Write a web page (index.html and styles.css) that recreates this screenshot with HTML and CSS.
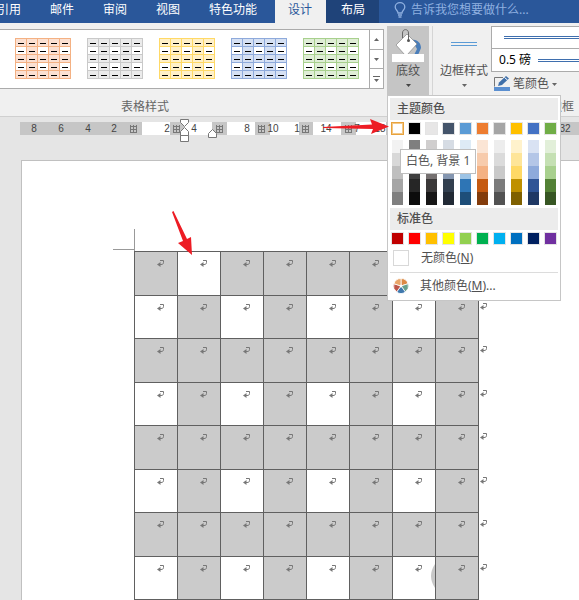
FILE: index.html
```html
<!DOCTYPE html>
<html lang="zh-CN">
<head>
    <meta charset="UTF-8">
    <meta name="viewport" content="width=device-width, initial-scale=1.0">
    <title>表格工具 - 设计</title>
    <link rel="stylesheet" href="styles.css">
</head>
<body>
    <nav class="tabs">
        <button class="tab">引用</button>
        <button class="tab">邮件</button>
        <button class="tab">审阅</button>
        <button class="tab">视图</button>
        <button class="tab">特色功能</button>
        <button class="tab active">设计</button>
        <button class="tab layout">布局</button>
        <button class="tell-me">
            <svg width="12" height="16" viewBox="0 0 12 16" fill="none" stroke="#8fb0e0" stroke-width="1.3">
                <path d="M4 11C4 8.500 1.200 8 1.200 5a4.800 4.300 0 0 1 9.600 0c0 3-2.800 3.500-2.800 6zM4 13h4M4.500 15h3"/>
            </svg>
            <span>告诉我您想要做什么...</span>
        </button>
    </nav>

    <div class="ribbon">
        <section class="group styles-group">
            <div class="gallery">
                <div class="thumbs" id="thumbs"></div>
                <div class="scroller">
                    <button aria-label="上一行"><svg width="5" height="3"><path d="M0 3h5L2.500 0z" fill="#666"/></svg></button>
                    <button aria-label="下一行"><svg width="5" height="3"><path d="M0 0h5L2.500 3z" fill="#666"/></svg></button>
                    <button aria-label="其他"><svg width="7" height="6"><path d="M0 0h7v1H0zM1 3h5L3.500 6z" fill="#666"/></svg></button>
                </div>
            </div>
            <h2 class="group-label">表格样式</h2>
        </section>

        <div class="shading">
            <button class="big-button pressed">
                <svg width="32" height="36" viewBox="0 0 32 36">
                    <path d="M20 12c5-1 9 3 9 8l-3 7h-4l3-6z" fill="#4a7eba"/>
                    <path d="M4 17L15 6l10 10-10 11h-2z" fill="#fff" stroke="#777" stroke-width=".6"/>
                    <path d="M10.500 10V5c0-4.500 6-4.500 6 0v7" fill="none" stroke="#666"/>
                    <circle cx="16.500" cy="12.500" r="1.500" fill="#555"/>
                    <rect y="26" width="32" height="8" fill="#fff"/>
                </svg>
                <span>底纹</span>
                <svg class="caret" width="5" height="3"><path d="M0 0h5L2.500 3z" fill="#444"/></svg>
            </button>

            <div class="menu">
                <h3>主题颜色</h3>
                <div class="row" id="theme"></div>
                <div class="shades" id="shades"></div>
                <h3>标准色</h3>
                <div class="row" id="standard"></div>
                <button class="item"><span class="none-box"></span>无颜色(<u>N</u>)</button>
                <button class="item more">
                    <svg width="16" height="16" viewBox="-8 -8 16 16" stroke="#fff" stroke-width=".8">
                        <path d="M0 0V-7.500A7.500 7.500 0 0 1 7.100-2.300z" fill="#dd8a45"/>
                        <path d="M0 0L7.100-2.300A7.500 7.500 0 0 1 4.400 6z" fill="#68a08c"/>
                        <path d="M0 0L4.400 6A7.500 7.500 0 0 1-4.400 6z" fill="#3f78ad"/>
                        <path d="M0 0L-4.400 6A7.500 7.500 0 0 1-7.100-2.300z" fill="#bd5548"/>
                        <path d="M0 0L-7.100-2.300A7.500 7.500 0 0 1 0-7.500z" fill="#e9a568"/>
                        <circle r="1" fill="#fff"/>
                    </svg>其他颜色(<u>M</u>)...
                </button>
                <div class="tooltip" role="tooltip">白色, 背景 1</div>
            </div>
        </div>

        <section class="group border-group">
            <div class="border-tools">
                <button class="big-button">
                    <svg width="32" height="36"><path d="M3 14.500h26M3 17.500h26" stroke="#5b9bd5"/></svg>
                    <span>边框样式</span>
                    <svg class="caret" width="5" height="3"><path d="M0 0h5L2.500 3z" fill="#666"/></svg>
                </button>
                <div class="pen">
                    <button class="line-box"><i class="double-line"></i></button>
                    <button class="line-box weight">0.5 磅<i class="double-line"></i></button>
                    <button class="pen-color">
                        <svg width="16" height="16" viewBox="0 0 16 16">
                            <path d="M9 1.500H.500v9" fill="none" stroke="#777"/>
                            <path d="M4 10l1-3.500L12 0l3 2.500L8 9z" fill="#3f6fa8"/>
                            <path d="M10.500 1.500l3 2.500" stroke="#fff"/>
                            <rect y="11" width="16" height="4" fill="#5b8fd0"/>
                        </svg>
                        笔颜色
                        <svg width="5" height="3"><path d="M0 0h5L2.500 3z" fill="#666"/></svg>
                    </button>
                </div>
            </div>
            <h2 class="group-label">边框</h2>
        </section>
    </div>

    <main class="workspace">
        <svg class="ruler" id="ruler" height="26"></svg>
        <div class="page">
            <table class="grid" id="grid"></table>
            <svg class="corner" width="22" height="22"><path d="M0 20.500h21.500M21.500 0v22" fill="none" stroke="#999"/></svg>
            <svg class="watermark" width="4" height="24"><path d="M4 0Q-4 12 4 24z" fill="#c8c8c8"/></svg>
        </div>
    </main>

    <svg class="arrow arrow-menu" width="66" height="16" viewBox="0 0 66 16"><path d="M0 8L49 5.500 47 0 66 7.500 48 15l2-5L0 9z" fill="#ed1c24"/></svg>
    <svg class="arrow arrow-cell" width="22" height="46" viewBox="0 0 22 46"><path d="M0 2l1.500-1L15 29l4-2 1 18L6 33l5-2z" fill="#ed1c24"/></svg>

    <script src="script.js"></script>
</body>
</html>
```
FILE: styles.css
```css
* {
    box-sizing: border-box;
}
body {
    margin: 0;
    min-height: 100vh;
    overflow: hidden;
    display: flex;
    flex-direction: column;
    position: relative;
    background-color: #e5e5e5;
    color: #505050;
    font-family: "Noto Sans", "Noto Sans CJK SC", sans-serif;
    font-size: 12px;
    line-height: 16px;
}
button {
    border: none;
    background: none;
    padding: 0;
    color: inherit;
    font: inherit;
}
h2, h3 {
    margin: 0;
    font-size: 12px;
    font-weight: normal;
}
svg {
    display: block;
    flex: none;
}

/* Tabs */
.tabs {
    display: flex;
    height: 23px;
    padding-right: 8px;
    background-color: #2a579a;
    color: #fff;
    white-space: nowrap;
}
.tab {
    flex: none;
    padding: 0 14px 4px 15px;
}
.tab:first-child {
    margin-left: -18px;
}
.tab.active {
    margin-left: 4px;
    padding: 0 14px 4px 13px;
    background-color: #f0f0f0;
    color: #2a579a;
}
.tab.layout {
    background-color: #1f4379;
}
.tell-me {
    display: flex;
    align-items: center;
    gap: 5px;
    padding: 0 0 4px 15px;
    color: #8fb0e0;
}

/* Ribbon */
.ribbon {
    display: flex;
    height: 94px;
    padding-top: 3px;
    background-color: #f0f0f0;
    border-bottom: 1px solid #d0d0d0;
    white-space: nowrap;
}
.group {
    display: flex;
    flex-direction: column;
    justify-content: space-between;
    padding-bottom: 1px;
}
.group-label {
    color: #666;
}
.styles-group {
    width: 387px;
    flex: none;
    padding-top: 3px;
}
.styles-group .group-label {
    padding-left: 121px;
}
.gallery {
    display: flex;
    width: 384px;
    height: 60px;
    background-color: #fff;
    border: 1px solid #ababab;
    border-left: none;
}
.thumbs {
    display: flex;
    flex: 1;
    gap: 16px;
    padding: 8px 0 0 15px;
}
.scroller {
    display: flex;
    flex-direction: column;
    width: 14px;
    border-left: 1px solid #ababab;
}
.scroller button {
    flex: 1;
    display: flex;
    align-items: center;
    justify-content: center;
}
.scroller button + button {
    border-top: 1px solid #ababab;
}
.shading {
    position: relative;
    width: 46px;
    flex: none;
    border-right: 1px solid #d5d5d5;
}
.big-button {
    display: flex;
    flex-direction: column;
    align-items: center;
    padding-top: 2px;
}
.big-button span {
    margin-top: -1px;
}
.big-button .caret {
    margin-top: 5px;
}
.pressed {
    width: 42px;
    height: 70px;
    background-color: #c5c5c5;
}
.border-group {
    flex: 1;
    min-width: 0;
}
.border-group .group-label {
    padding-right: 5px;
    text-align: right;
}
.border-tools {
    display: flex;
    gap: 3px;
    padding-left: 7px;
}
.pen {
    flex: 1;
    display: flex;
    flex-direction: column;
}
.line-box {
    display: flex;
    align-items: center;
    gap: 7px;
    height: 23px;
    padding-left: 12px;
    background-color: #fff;
    border: 1px solid #ababab;
    border-right: none;
}
.line-box.weight {
    padding-left: 7px;
    border-top: none;
    color: #000;
}
.double-line {
    flex: 1;
    height: 3px;
    border: solid #3f6fae;
    border-width: 1px 0;
}
.pen-color {
    display: flex;
    align-items: center;
    gap: 3px;
    padding: 4px 0 0 3px;
}

/* Color menu */
.menu {
    position: absolute;
    top: 69px;
    left: 0;
    z-index: 2;
    width: 174px;
    padding: 2px;
    background-color: #fff;
    border: 1px solid #c6c6c6;
}
.menu h3 {
    height: 22px;
    padding: 2px 0 0 7px;
    background-color: #ececec;
    font-weight: 500;
    line-height: 18px;
}
.row, .shades {
    display: grid;
    grid-template-columns: repeat(10, 11px);
    column-gap: 6px;
    padding: 0 2px;
}
.row {
    padding-top: 3px;
}
.row button {
    height: 11px;
    outline: 1px solid #e4e4e4;
}
.row .selected {
    outline: 1px solid #e8a33d;
    border: 1px solid #f3c888;
}
.shades {
    padding-top: 6px;
    padding-bottom: 3px;
}
.shades button {
    height: 13px;
}
.item {
    display: flex;
    align-items: center;
    width: 100%;
    height: 28px;
    padding-left: 3px;
}
.none-box {
    width: 16px;
    height: 16px;
    margin-right: 12px;
    border: 1px solid #d8d8d8;
}
.more {
    height: 26px;
    border-top: 1px solid #dcdcdc;
}
.more svg {
    margin-right: 11px;
}
.tooltip {
    position: absolute;
    top: 53px;
    left: 12px;
    padding: 3px 5px 4px;
    background-color: #fff;
    border: 1px solid #bebebe;
    color: #555;
}

/* Document */
.workspace {
    flex: 1;
    display: flex;
    flex-direction: column;
    padding-top: 4px;
}
.ruler {
    width: 100%;
    overflow: visible;
    font-family: "Liberation Sans", sans-serif;
    font-size: 10px;
}
.page {
    position: relative;
    flex: 1;
    margin: 13px 0 0 21px;
    padding: 90px 0 0 112px;
    background-color: #fff;
    border: solid #c0c0c0;
    border-width: 1px 0 0 1px;
}
.grid {
    border-collapse: collapse;
}
.grid td {
    width: 43px;
    height: 43px;
    padding: 7px 0 0 22px;
    background-color: #cbcbcb;
    border: 1px solid #606060;
    vertical-align: top;
}
.grid tr:nth-child(odd) td {
    height: 44px;
}
.grid td.white {
    background-color: #fff;
}
.grid td.row-end {
    width: 12px;
    padding: 6px 0 0 1px;
    background: none;
    border: none;
}
.corner {
    position: absolute;
    top: 68px;
    left: 91px;
}
.watermark {
    position: absolute;
    top: 403px;
    left: 409px;
}
.arrow {
    position: absolute;
    z-index: 3;
}
.arrow-menu {
    top: 119px;
    left: 323px;
}
.arrow-cell {
    top: 210px;
    left: 172px;
}
```
FILE: script.js
```js
// Table style thumbnails: border color, fill color
const tableStyles = [
    ["#f4b183", "#fbe0d2"],
    ["#c9c9c9", "#ebebeb"],
    ["#ffd966", "#fff0c8"],
    ["#8eaadb", "#d5e0f3"],
    ["#a8d08d", "#dfeed6"]
];

document.getElementById("thumbs").innerHTML = tableStyles.map(([line, fill]) => {
    let cells = "";
    for (let r = 0; r < 5; r++) {
        for (let c = 0; c < 5; c++) {
            const x = c * 11 + 0.5;
            const y = r * 8 + 0.5;
            const color = r % 2 && c % 2 === 0 ? "#fff" : fill;
            cells += `<rect x="${x}" y="${y}" width="11" height="8" fill="${color}" stroke="${line}"/>`;
            cells += `<path d="M${x + 2.5} ${y + 5}h6" stroke="#000"/>`;
        }
    }
    return `<svg width="56" height="41">${cells}</svg>`;
}).join("");

// Color palettes
const theme = ["#ffffff", "#000000", "#e7e6e6", "#44546a", "#5b9bd5", "#ed7d31", "#a5a5a5", "#ffc000", "#4472c4", "#70ad47"];
const standard = ["#c00000", "#ff0000", "#ffc000", "#ffff00", "#92d050", "#00b050", "#00b0f0", "#0070c0", "#002060", "#7030a0"];
const shades = [
    ["#f2f2f2", "#7f7f7f", "#d0cece", "#d6dce4", "#deebf6", "#fbe5d5", "#ededed", "#fff2cc", "#d9e2f3", "#e2efd9"],
    ["#d8d8d8", "#595959", "#aeabab", "#adb9ca", "#bdd7ee", "#f7cbac", "#dbdbdb", "#fee599", "#b4c6e7", "#c5e0b3"],
    ["#bfbfbf", "#3f3f3f", "#757070", "#8496b0", "#9cc3e5", "#f4b183", "#c9c9c9", "#ffd965", "#8eaadb", "#a8d08d"],
    ["#a5a5a5", "#262626", "#3a3838", "#323f4f", "#2e75b5", "#c55a11", "#7b7b7b", "#bf9000", "#2f5496", "#538135"],
    ["#7f7f7f", "#0c0c0c", "#171616", "#222a35", "#1e4e79", "#833c0b", "#525252", "#7f6000", "#1f3864", "#375623"]
];

function swatches(colors) {
    return colors.map(c => `<button style="background-color: ${c}" aria-label="${c}"></button>`).join("");
}

document.getElementById("theme").innerHTML = swatches(theme);
document.querySelector("#theme button").className = "selected";
document.getElementById("standard").innerHTML = swatches(standard);
document.getElementById("shades").innerHTML = swatches(shades.flat());

// Ruler: margins are gray, columns are white, markers sit on the column borders
let ruler = '<rect x="20" y="1" width="559" height="13" fill="#c6c6c6"/>';
[[142, 28], [184, 28], [227, 28], [270, 29], [313, 28], [356, 30]].forEach(([x, w]) => {
    ruler += `<rect x="${x}" y="1" width="${w}" height="13" fill="#fff"/>`;
});
[[34, 8], [61, 6], [88, 4], [114, 2], [167, 2], [194, 4], [247, 8], [273, 10], [297, 1], [326, 14], [357, 7], [380, 18], [565, 32]].forEach(([x, n]) => {
    ruler += `<text x="${x}" y="11" text-anchor="middle" fill="#444">${n}</text>`;
});
[130, 173, 216, 258, 302, 345].forEach(x => {
    ruler += `<path d="M${x} 5.500h7M${x} 8.500h7M${x} 11.500h7M${x + 0.5} 4v8M${x + 3.5} 4v8M${x + 6.5} 4v8" stroke="#777"/>`;
});
ruler += '<path d="M180.500 -1.500h8v3l-4 4-4-4zM180.500 14.500v-4l4-4 4 4v4zM180.500 14.500h8v6h-8zM208.500 16.500v-4l4-4 4 4v4z" fill="#fff" stroke="#777"/>';
document.getElementById("ruler").innerHTML = ruler;

// Document table with end-of-cell marks
const mark = '<svg width="8" height="9" viewBox="0 0 8 9" fill="none" stroke="#777"><path d="M3 1.500h3.500v2c0 1.500-1 2-2.500 2H2"/><path d="M3.500 3v5L0 5.500z" fill="#777" stroke="none"/></svg>';
let rows = "";
for (let r = 0; r < 8; r++) {
    rows += "<tr>";
    for (let c = 0; c < 8; c++) {
        const white = r === 0 ? c === 1 : r % 2 === 1 && c % 2 === 0;
        rows += `<td${white ? ' class="white"' : ""}>${mark}</td>`;
    }
    rows += `<td class="row-end">${mark}</td></tr>`;
}
document.getElementById("grid").innerHTML = rows;
```
